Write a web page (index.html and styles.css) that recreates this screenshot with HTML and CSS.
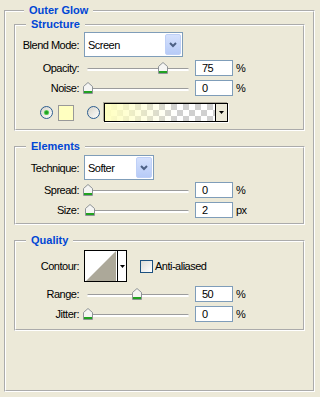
FILE: index.html
```html
<!DOCTYPE html>
<html lang="en">
<head>
    <meta charset="UTF-8">
    <title>Outer Glow</title>
    <link rel="stylesheet" href="styles.css">
</head>
<body>
<div class="panel">
    <fieldset class="group outer">
        <legend>Outer Glow</legend>

        <fieldset class="group structure">
            <legend>Structure</legend>
            <div class="row combo-row">
                <span class="label">Blend Mode:</span>
                <div class="combo blend">
                    <span>Screen</span>
                    <span class="combo-btn"><svg width="8" height="6" viewBox="0 0 8 6"><polyline points="1,1 4,4 7,1" fill="none" stroke="#4d6185" stroke-width="2"/></svg></span>
                </div>
            </div>
            <div class="row">
                <span class="label">Opacity:</span>
                <div class="slider">
                    <div class="track"></div>
                    <svg class="thumb" style="left: 74px" width="10" height="12" viewBox="0 0 10 12"><path d="M0.5 4.5 L5 0.5 L9.5 4.5 V11.5 H0.5 Z" fill="#f5f5f3" stroke="#8e9396"/><rect x="1" y="9" width="8" height="2" fill="#21a121"/></svg>
                </div>
                <div class="num">75</div>
                <span class="unit">%</span>
            </div>
            <div class="row">
                <span class="label">Noise:</span>
                <div class="slider">
                    <div class="track"></div>
                    <svg class="thumb" style="left: -1px" width="10" height="12" viewBox="0 0 10 12"><path d="M0.5 4.5 L5 0.5 L9.5 4.5 V11.5 H0.5 Z" fill="#f5f5f3" stroke="#8e9396"/><rect x="1" y="9" width="8" height="2" fill="#21a121"/></svg>
                </div>
                <div class="num">0</div>
                <span class="unit">%</span>
            </div>
            <div class="colors">
                <svg class="radio" width="13" height="13" viewBox="0 0 13 13"><defs><linearGradient id="rg1" x1="0" y1="0" x2="1" y2="1"><stop offset="0" stop-color="#d6d3c8"/><stop offset="1" stop-color="#ffffff"/></linearGradient></defs><circle cx="6.5" cy="6.5" r="6" fill="url(#rg1)" stroke="#2c5d8f"/><circle cx="6.5" cy="6.5" r="2.6" fill="#5fd05f"/><circle cx="6.5" cy="6.5" r="1.7" fill="#21a121"/></svg>
                <div class="swatch"></div>
                <svg class="radio second" width="13" height="13" viewBox="0 0 13 13"><defs><linearGradient id="rg2" x1="0" y1="0" x2="1" y2="1"><stop offset="0" stop-color="#d6d3c8"/><stop offset="1" stop-color="#ffffff"/></linearGradient></defs><circle cx="6.5" cy="6.5" r="6" fill="url(#rg2)" stroke="#2c5d8f"/></svg>
                <div class="gradient">
                    <div class="gradient-fill"></div>
                    <div class="drop"><svg width="5" height="3" viewBox="0 0 5 3"><polygon points="0,0 5,0 2.5,3" fill="#000"/></svg></div>
                </div>
            </div>
        </fieldset>

        <fieldset class="group elements">
            <legend>Elements</legend>
            <div class="row combo-row">
                <span class="label">Technique:</span>
                <div class="combo technique">
                    <span>Softer</span>
                    <span class="combo-btn"><svg width="8" height="6" viewBox="0 0 8 6"><polyline points="1,1 4,4 7,1" fill="none" stroke="#4d6185" stroke-width="2"/></svg></span>
                </div>
            </div>
            <div class="row">
                <span class="label">Spread:</span>
                <div class="slider">
                    <div class="track"></div>
                    <svg class="thumb" style="left: -1px" width="10" height="12" viewBox="0 0 10 12"><path d="M0.5 4.5 L5 0.5 L9.5 4.5 V11.5 H0.5 Z" fill="#f5f5f3" stroke="#8e9396"/><rect x="1" y="9" width="8" height="2" fill="#21a121"/></svg>
                </div>
                <div class="num">0</div>
                <span class="unit">%</span>
            </div>
            <div class="row">
                <span class="label">Size:</span>
                <div class="slider">
                    <div class="track"></div>
                    <svg class="thumb" style="left: 1px" width="10" height="12" viewBox="0 0 10 12"><path d="M0.5 4.5 L5 0.5 L9.5 4.5 V11.5 H0.5 Z" fill="#f5f5f3" stroke="#8e9396"/><rect x="1" y="9" width="8" height="2" fill="#21a121"/></svg>
                </div>
                <div class="num">2</div>
                <span class="unit">px</span>
            </div>
        </fieldset>

        <fieldset class="group quality">
            <legend>Quality</legend>
            <div class="row contour-row">
                <span class="label">Contour:</span>
                <div class="contour">
                    <div class="contour-preview"><svg width="30" height="30" viewBox="0 0 30 30"><polygon points="0,30 30,0 30,30" fill="#aca899"/></svg></div>
                    <div class="drop"><svg width="5" height="3" viewBox="0 0 5 3"><polygon points="0,0 5,0 2.5,3" fill="#000"/></svg></div>
                </div>
                <span class="check"></span>
                <span class="check-label">Anti-aliased</span>
            </div>
            <div class="row">
                <span class="label">Range:</span>
                <div class="slider">
                    <div class="track"></div>
                    <svg class="thumb" style="left: 48px" width="10" height="12" viewBox="0 0 10 12"><path d="M0.5 4.5 L5 0.5 L9.5 4.5 V11.5 H0.5 Z" fill="#f5f5f3" stroke="#8e9396"/><rect x="1" y="9" width="8" height="2" fill="#21a121"/></svg>
                </div>
                <div class="num">50</div>
                <span class="unit">%</span>
            </div>
            <div class="row">
                <span class="label">Jitter:</span>
                <div class="slider">
                    <div class="track"></div>
                    <svg class="thumb" style="left: -1px" width="10" height="12" viewBox="0 0 10 12"><path d="M0.5 4.5 L5 0.5 L9.5 4.5 V11.5 H0.5 Z" fill="#f5f5f3" stroke="#8e9396"/><rect x="1" y="9" width="8" height="2" fill="#21a121"/></svg>
                </div>
                <div class="num">0</div>
                <span class="unit">%</span>
            </div>
        </fieldset>
    </fieldset>
</div>
</body>
</html>
```

FILE: styles.css
```css
body {
    margin: 0;
    background: #ece9d8;
    color: #000;
    font: 11px "Liberation Sans", Arial, sans-serif;
    letter-spacing: -0.5px;
}

.panel {
    width: 320px;
    height: 397px;
    box-sizing: border-box;
    padding: 4px 5px 0 4px;
}

.group {
    margin: 0;
    padding: 0;
    min-width: 0;
    border: 2px groove #fff;
}

.group legend {
    margin-left: 10px;
    padding: 0 5px;
    color: #0046d5;
    font-weight: bold;
    line-height: 13px;
    letter-spacing: 0;
}

.outer {
    padding: 1px 8px 59px;
}

.elements,
.quality {
    margin-top: 9px;
}

.structure {
    padding-bottom: 7px;
}

.elements {
    padding-bottom: 3px;
}

.quality {
    padding-bottom: 5px;
}

.row {
    display: flex;
    align-items: center;
    height: 20px;
}

.label {
    flex: none;
    width: 63px;
    margin-right: 5px;
    text-align: right;
}

.combo-row {
    height: 25px;
    margin-top: 1px;
    margin-bottom: 1px;
}

.elements .combo-row {
    margin-top: 2px;
    margin-bottom: 0;
}

.combo {
    display: flex;
    align-items: center;
    justify-content: space-between;
    height: 25px;
    box-sizing: border-box;
    padding: 1px 1px 1px 3px;
    border: 1px solid #7f9db9;
    background: #fff;
}

.blend {
    width: 99px;
}

.technique {
    width: 70px;
}

.combo-btn {
    display: flex;
    align-items: center;
    justify-content: center;
    width: 16px;
    height: 21px;
    box-sizing: border-box;
    border: 1px solid #bfd0f7;
    border-radius: 2px;
    background: linear-gradient(#d5e1fd, #b7cbf7);
}

.slider {
    position: relative;
    flex: none;
    width: 108px;
    height: 14px;
    margin-right: 3px;
}

.track {
    height: 2px;
    margin: 7px 3px 0;
    border-top: 1px solid #9c9c9c;
    border-radius: 2px;
    background: #fff;
}

.thumb {
    position: absolute;
    top: 1px;
}

.num {
    flex: none;
    width: 38px;
    height: 16px;
    box-sizing: border-box;
    padding-left: 6px;
    border: 1px solid #7f9db9;
    background: #fff;
    line-height: 14px;
}

.unit {
    margin-left: 3px;
}

.colors {
    display: flex;
    align-items: center;
    height: 19px;
    margin-top: 5px;
    padding-left: 24px;
}

.swatch {
    width: 16px;
    height: 16px;
    margin-left: 5px;
    box-sizing: border-box;
    border: 1px solid #999;
    background: #ffffc0;
}

.radio.second {
    margin-left: 13px;
}

.gradient {
    display: flex;
    width: 124px;
    height: 19px;
    margin-left: 4px;
    box-sizing: border-box;
    border: 1px solid #000;
    box-shadow: -1px -1px 0 #aca899, 1px 1px 0 #fff;
}

.gradient-fill {
    flex: 1;
    background:
        linear-gradient(90deg, #ffffc0, rgba(255, 255, 192, 0) 65%),
        conic-gradient(#d0d0d0 25%, #fff 0 50%, #d0d0d0 0 75%, #fff 0);
    background-size: auto, 12px 12px;
}

.drop {
    display: flex;
    align-items: center;
    justify-content: center;
    width: 11px;
    border-left: 1px solid #000;
    background: #ece9d8;
}

.contour-row {
    height: 32px;
    margin-top: 3px;
    margin-bottom: 2px;
}

.contour {
    display: flex;
    width: 43px;
    height: 32px;
    box-sizing: border-box;
    border: 1px solid #000;
    background: #fff;
}

.contour-preview {
    padding: 0 1px;
    line-height: 0;
}

.contour .drop {
    background: #fff;
}

.check {
    width: 13px;
    height: 13px;
    margin-left: 13px;
    box-sizing: border-box;
    border: 1px solid #1c5180;
    background: linear-gradient(135deg, #dcdcd7, #fff);
}

.check-label {
    margin-left: 2px;
}
```
